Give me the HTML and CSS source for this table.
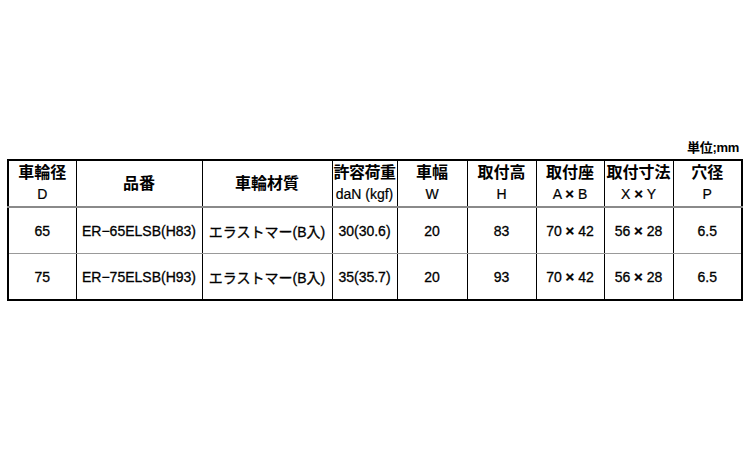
FILE: index.html
```html
<!DOCTYPE html>
<html lang="ja">
<head>
<meta charset="utf-8">
<link rel="stylesheet" href="styles.css">
</head>
<body>
<div class="wrap">
  <div class="unit">単位;mm</div>
  <table class="spec">
    <colgroup>
      <col class="c1"><col class="c2"><col class="c3"><col class="c4"><col class="c5"><col class="c6"><col class="c7"><col class="c8"><col class="c9">
    </colgroup>
    <thead>
      <tr>
        <th>車輪径<br><span class="sub">D</span></th>
        <th>品番</th>
        <th>車輪材質</th>
        <th class="tight">許容荷重<br><span class="sub">daN (kgf)</span></th>
        <th>車幅<br><span class="sub">W</span></th>
        <th>取付高<br><span class="sub">H</span></th>
        <th>取付座<br><span class="sub">A <span class="x">×</span> B</span></th>
        <th>取付寸法<br><span class="sub">X <span class="x">×</span> Y</span></th>
        <th>穴径<br><span class="sub">P</span></th>
      </tr>
    </thead>
    <tbody>
      <tr>
        <td>65</td>
        <td>ER−65ELSB(H83)</td>
        <td>エラストマー(B入)</td>
        <td>30(30.6)</td>
        <td>20</td>
        <td>83</td>
        <td>70 <span class="x">×</span> 42</td>
        <td>56 <span class="x">×</span> 28</td>
        <td>6.5</td>
      </tr>
      <tr>
        <td>75</td>
        <td>ER−75ELSB(H93)</td>
        <td>エラストマー(B入)</td>
        <td>35(35.7)</td>
        <td>20</td>
        <td>93</td>
        <td>70 <span class="x">×</span> 42</td>
        <td>56 <span class="x">×</span> 28</td>
        <td>6.5</td>
      </tr>
    </tbody>
  </table>
</div>
</body>
</html>
```
FILE: styles.css
```css
html, body {
  margin: 0;
  padding: 0;
  background: #ffffff;
}
body {
  font-family: "Liberation Sans", "Noto Sans CJK JP", sans-serif;
  color: #000;
}
.wrap {
  width: 734px;
  margin: 138px 0 0 7px;
}
.unit {
  text-align: right;
  font-size: 13px;
  font-weight: 700;
  line-height: 20px;
  height: 21px;
  padding-right: 2px;
  letter-spacing: -0.3px;
}
.spec {
  border-collapse: collapse;
  table-layout: fixed;
  width: 734px;
  border: 2px solid #000;
}
.c1 { width: 68px; }
.c2 { width: 126px; }
.c3 { width: 130px; }
.c4 { width: 65px; }
.c5 { width: 70px; }
.c6 { width: 69px; }
.c7 { width: 68px; }
.c8 { width: 69px; }
.c9 { width: 69px; }
.spec th, .spec td {
  border-left: 1px solid #000;
  border-right: 1px solid #000;
  padding: 0;
  text-align: center;
  white-space: nowrap;
  overflow: hidden;
}
.spec th {
  height: 45px;
  font-size: 16px;
  font-weight: 700;
  line-height: 21px;
  border-bottom: 2px solid #8a8a8a;
}
.spec th .sub {
  font-size: 14px;
  font-weight: 400;
  -webkit-text-stroke: 0.2px #000;
}
.spec th.tight {
  letter-spacing: -0.5px;
}
.spec th.tight .sub {
  letter-spacing: 0;
}
.spec td {
  height: 45px;
  font-size: 14px;
  font-weight: 400;
  -webkit-text-stroke: 0.3px #000;
  border-bottom: 1px solid #999;
}
.spec .x {
  font-size: 15px;
  font-weight: 700;
}
.spec tbody tr:last-child td {
  border-bottom: 2px solid #000;
}
```
